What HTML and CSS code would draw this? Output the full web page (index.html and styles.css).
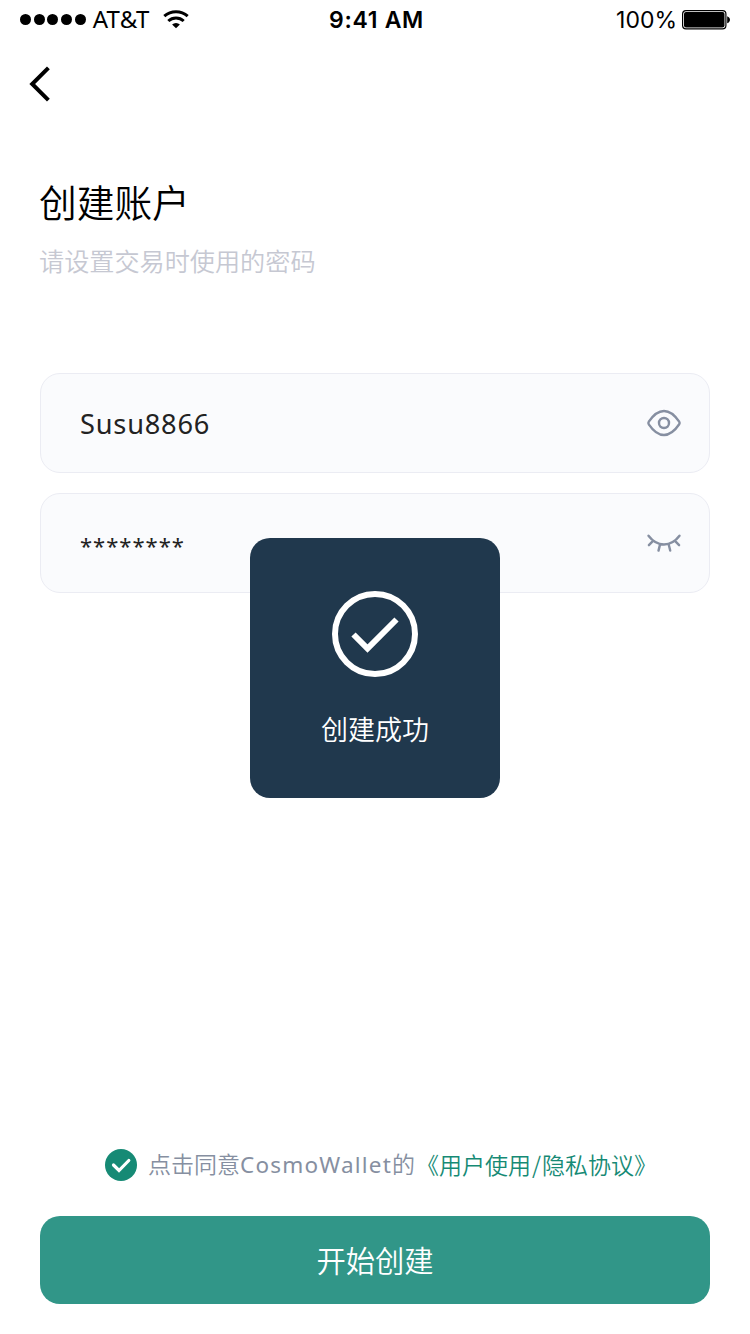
FILE: index.html
```html
<!DOCTYPE html>
<html lang="zh-CN">
<head>
<meta charset="utf-8">
<title>创建账户</title>
<link rel="stylesheet" href="styles.css">
</head>
<body>
<div class="screen">
  <header class="status">
    <div class="status-left">
      <span class="signal"><i></i><i></i><i></i><i></i><i></i></span>
      <span class="carrier">AT&amp;T</span>
      <svg class="wifi" width="26" height="20" viewBox="0 0 26 20" fill="none" stroke="#000" stroke-width="3">
        <path d="M1.300 6.200a17.500 17.500 0 0 1 23.400 0"/>
        <path d="M5.300 11a11.400 11.400 0 0 1 15.400 0"/>
        <path d="M13 18.200l-3.900-3.600a5.600 5.600 0 0 1 7.800 0z" fill="#000" stroke="none"/>
      </svg>
    </div>
    <span class="clock">9:41 AM</span>
    <div class="status-right">
      <span class="percent">100%</span>
      <svg width="49" height="20" viewBox="0 0 49 20">
        <rect x=".6" y=".6" width="43.3" height="18.3" rx="3.4" fill="none" stroke="#000" stroke-width="1.2"/>
        <rect x="2" y="2" width="40.5" height="15.5" rx="2" fill="#000"/>
        <path d="M45.2 6.3c3.7 1.3 3.7 5.8 0 7z" fill="#000"/>
      </svg>
    </div>
  </header>
  <nav class="nav">
    <svg width="24" height="36" viewBox="0 0 24 36" fill="none" stroke="#000" stroke-width="4"><path d="M20.4 1.8L4.2 18l16.2 16.2"/></svg>
  </nav>
  <main class="main">
    <h1 class="title">创建账户</h1>
    <p class="subtitle">请设置交易时使用的密码</p>
    <div class="fields">
      <div class="field">
        <span class="value">Susu8866</span>
        <svg class="eye" width="36" height="30" viewBox="0 0 36 30" fill="none" stroke="#868fa1" stroke-width="2.4">
          <path d="M2.800 13.700C7.200 7.200 11.600 3 18 3s10.800 4.200 15.200 10.700q.9 1.300 0 2.600C28.800 22.800 24.400 27 18 27S7.200 22.800 2.800 16.300q-.9-1.300 0-2.600z"/>
          <circle cx="18" cy="15" r="5"/>
        </svg>
      </div>
      <div class="field">
        <span class="value masked">********</span>
        <svg class="eye" width="36" height="30" viewBox="0 0 36 30" fill="none" stroke="#868fa1" stroke-width="2.400" stroke-linecap="round">
          <path d="M2.500 7.800C11 19.300 25 19.300 33.500 7.800M7.300 12.700l-4.400 4.500M28.700 12.700l4.400 4.500M14 16.600l-1.500 6M22.700 16.500l1.500 6"/>
        </svg>
      </div>
    </div>
  </main>
  <footer class="footer">
    <div class="agree">
      <svg width="32" height="32" viewBox="0 0 32 32" fill="none"><circle cx="16" cy="16" r="16" fill="#168a75"/><path d="M8.500 16l5.500 5.500L23.800 11.500" stroke="#fff" stroke-width="3.200" stroke-linecap="round"/></svg>
      <p class="agree-text"><span class="cjk">点击同意</span><span class="latin">CosmoWallet</span><span class="cjk">的</span></p>
      <a class="link">《用户使用<span class="slash">/</span>隐私协议》</a>
    </div>
    <button class="submit">开始创建</button>
  </footer>
  <div class="toast">
    <svg width="86" height="86" viewBox="0 0 86 86" fill="none" stroke="#fff"><circle cx="43" cy="43" r="40" stroke-width="6"/><path d="M21.500 43.500L35.500 57.500L64.500 28.500" stroke-width="6"/></svg>
    <span class="toast-text">创建成功</span>
  </div>
</div>
</body>
</html>
```
FILE: styles.css
```css
* { box-sizing: border-box; }
body { margin: 0; background: #fff; font-family: "Noto Sans", "Noto Sans CJK SC", sans-serif; font-weight: 350; }
h1, p { margin: 0; font-weight: 350; }
svg { display: block; flex: none; }
.screen { position: relative; width: 750px; height: 1334px; display: flex; flex-direction: column; background: #fff; overflow: hidden; white-space: nowrap; }
.status { height: 40px; padding: 0 20px; display: grid; grid-template-columns: 1fr auto 1fr; align-items: center; font-family: Inter, sans-serif; font-weight: 400; font-size: 23px; line-height: 40px; color: #000; }
.status-left, .status-right { display: flex; align-items: center; }
.status-right { justify-content: flex-end; gap: 6px; margin-right: -1px; }
.percent { margin-right: -1px; }
.signal { display: flex; gap: 2.700px; margin-top: -1px; }
.signal i { width: 11px; height: 11px; border-radius: 50%; background: #000; }
.carrier { margin-left: 7px; font-family: "Noto Sans", sans-serif; font-size: 24px; line-height: 38px; margin-top: -2px; letter-spacing: .2px; }
.wifi { margin-left: 13px; }
.clock { font-weight: 600; letter-spacing: .7px; margin-left: 3px; }
.nav { height: 88px; padding: 26px 0 0 28px; }
.main { flex: 1; padding: 46px 40px 0; }
.title { font-family: "Noto Sans CJK SC", sans-serif; font-size: 37.700px; line-height: 54px; color: #000; margin-left: -1px; }
.subtitle { margin: 14px 0 0 -1px; font-family: "Noto Sans CJK SC", sans-serif; font-size: 25.150px; line-height: 36px; color: #c6c8d2; }
.fields { display: flex; flex-direction: column; gap: 20px; margin-top: 95px; }
.field { height: 100px; padding: 0 27px 0 39px; border: 1px solid #ebecf3; border-radius: 20px; background: #fafbfd; display: flex; align-items: center; justify-content: space-between; }
.value { padding-top: 2px; font-size: 27.200px; line-height: 40px; font-weight: 400; letter-spacing: .800px; color: #222; }
.masked { font-size: 22px; letter-spacing: 1px; padding-top: 4px; }
.footer { padding: 0 40px 30px; }
.agree { display: flex; align-items: center; height: 36px; margin: 0 0 33px 65px; font-size: 23px; line-height: 36px; color: #868fa1; }
.agree-text { margin: -2px 0 0 11px; }
.cjk, .link { font-family: "Noto Sans CJK SC", sans-serif; }
.latin { font-size: 22.500px; font-weight: 400; letter-spacing: 1.200px; }
.link { margin: -2px 0 0 1px; color: #168a75; }
.slash { margin: 0 1px; }
.submit { display: block; width: 100%; height: 88px; padding: 0 0 3px; border: 0; border-radius: 20px; background: #319688; color: #fff; font-family: "Noto Sans CJK SC", sans-serif; font-size: 29.300px; font-weight: 350; }
.toast { position: absolute; left: 250px; top: 538px; width: 250px; height: 260px; border-radius: 20px; background: #20384d; color: #fff; display: flex; flex-direction: column; align-items: center; padding-top: 53px; }
.toast-text { margin-top: 32px; font-family: "Noto Sans CJK SC", sans-serif; font-size: 27px; line-height: 40px; }
```
